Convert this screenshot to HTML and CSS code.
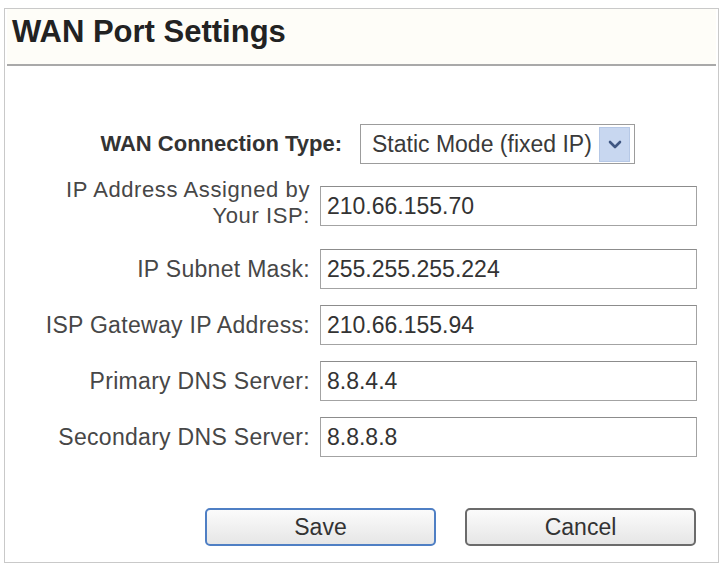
FILE: index.html
```html
<!DOCTYPE html>
<html lang="en">
<head>
  <meta charset="UTF-8" />
  <title>WAN Port Settings</title>
  <link rel="stylesheet" href="styles.css">
</head>
<body>
  <div class="panel">
    <div class="panel-head">
      <h1>WAN Port Settings</h1>
    </div>

    <div class="form">
      <div class="row row-type">
        <label class="bold">WAN Connection Type:</label>
        <div class="select">
          <span class="select-text">Static Mode (fixed IP)</span>
          <span class="select-arrow">
            <svg width="14" height="9" viewBox="0 0 14 9">
              <path d="M2 2 L7 7 L12 2" fill="none" stroke="#3f5682" stroke-width="2.6" stroke-linecap="round" stroke-linejoin="round"/>
            </svg>
          </span>
        </div>
      </div>

      <div class="row row-tall">
        <label>IP Address Assigned by<br>Your ISP:</label>
        <input type="text" value="210.66.155.70">
      </div>

      <div class="row">
        <label>IP Subnet Mask:</label>
        <input type="text" value="255.255.255.224">
      </div>

      <div class="row">
        <label>ISP Gateway IP Address:</label>
        <input type="text" value="210.66.155.94">
      </div>

      <div class="row">
        <label>Primary DNS Server:</label>
        <input type="text" value="8.8.4.4">
      </div>

      <div class="row">
        <label>Secondary DNS Server:</label>
        <input type="text" value="8.8.8.8">
      </div>

      <div class="buttons">
        <button class="btn btn-focus">Save</button>
        <button class="btn">Cancel</button>
      </div>
    </div>
  </div>
</body>
</html>
```

FILE: styles.css
```css
* {
  box-sizing: border-box;
  margin: 0;
  padding: 0;
}

body {
  background: #ffffff;
  font-family: "Liberation Sans", Arial, sans-serif;
  color: #3a3a3a;
}

.panel {
  margin: 8px 4px 0 4px;
  height: 555px;
  border: 1px solid #c9c9c9;
  background: #ffffff;
}

.panel-head {
  padding: 5px 0 14px 5px;
  margin: 0 2px;
  background: #fefdf8;
  border-bottom: 2px solid #a9a9a9;
}

h1 {
  font-size: 31px;
  line-height: 36px;
  font-weight: bold;
  color: #222222;
}

.form {
  padding-top: 58px;
  display: flex;
  flex-direction: column;
  gap: 16px;
}

.row {
  display: flex;
  align-items: center;
  gap: 10px;
}

.row label {
  width: 305px;
  text-align: right;
  font-size: 23px;
  letter-spacing: 0.3px;
  line-height: 26px;
  color: #474747;
}

.row-type {
  gap: 18px;
}

.row-type label {
  width: 337px;
}

label.bold {
  font-weight: bold;
  font-size: 22px;
  letter-spacing: 0;
  color: #333333;
}

.row-tall {
  align-items: flex-start;
  height: 53px;
}

.row-tall label {
  font-size: 22px;
  letter-spacing: 0.6px;
  margin-top: -3px;
}

.row-tall input {
  margin-top: 6px;
}

input {
  width: 377px;
  height: 40px;
  padding: 0 6px;
  border: 1px solid #a3a3a3;
  border-top-color: #8c8c8c;
  background: #ffffff;
  font-family: "Liberation Sans", Arial, sans-serif;
  font-size: 23px;
  color: #333333;
}

.select {
  width: 275px;
  height: 40px;
  display: flex;
  align-items: center;
  justify-content: space-between;
  padding: 0 4px 0 11px;
  border: 1px solid #9c9c9c;
  background: #ffffff;
}

.select-text {
  font-size: 23px;
  color: #3a3a3a;
}

.select-arrow {
  width: 31px;
  height: 35px;
  display: flex;
  align-items: center;
  justify-content: center;
  background: #c8d7f0;
  border: 1px solid #b6c8e6;
}

.buttons {
  display: flex;
  gap: 29px;
  padding-left: 200px;
  margin-top: 35px;
}

.btn {
  width: 231px;
  height: 38px;
  border: 2px solid #6b6b6b;
  border-radius: 5px;
  background: linear-gradient(to bottom, #fbfbfb, #e6e6e6);
  font-family: "Liberation Sans", Arial, sans-serif;
  font-size: 23px;
  color: #333333;
}

.btn-focus {
  border-color: #4f7fc4;
}
```
